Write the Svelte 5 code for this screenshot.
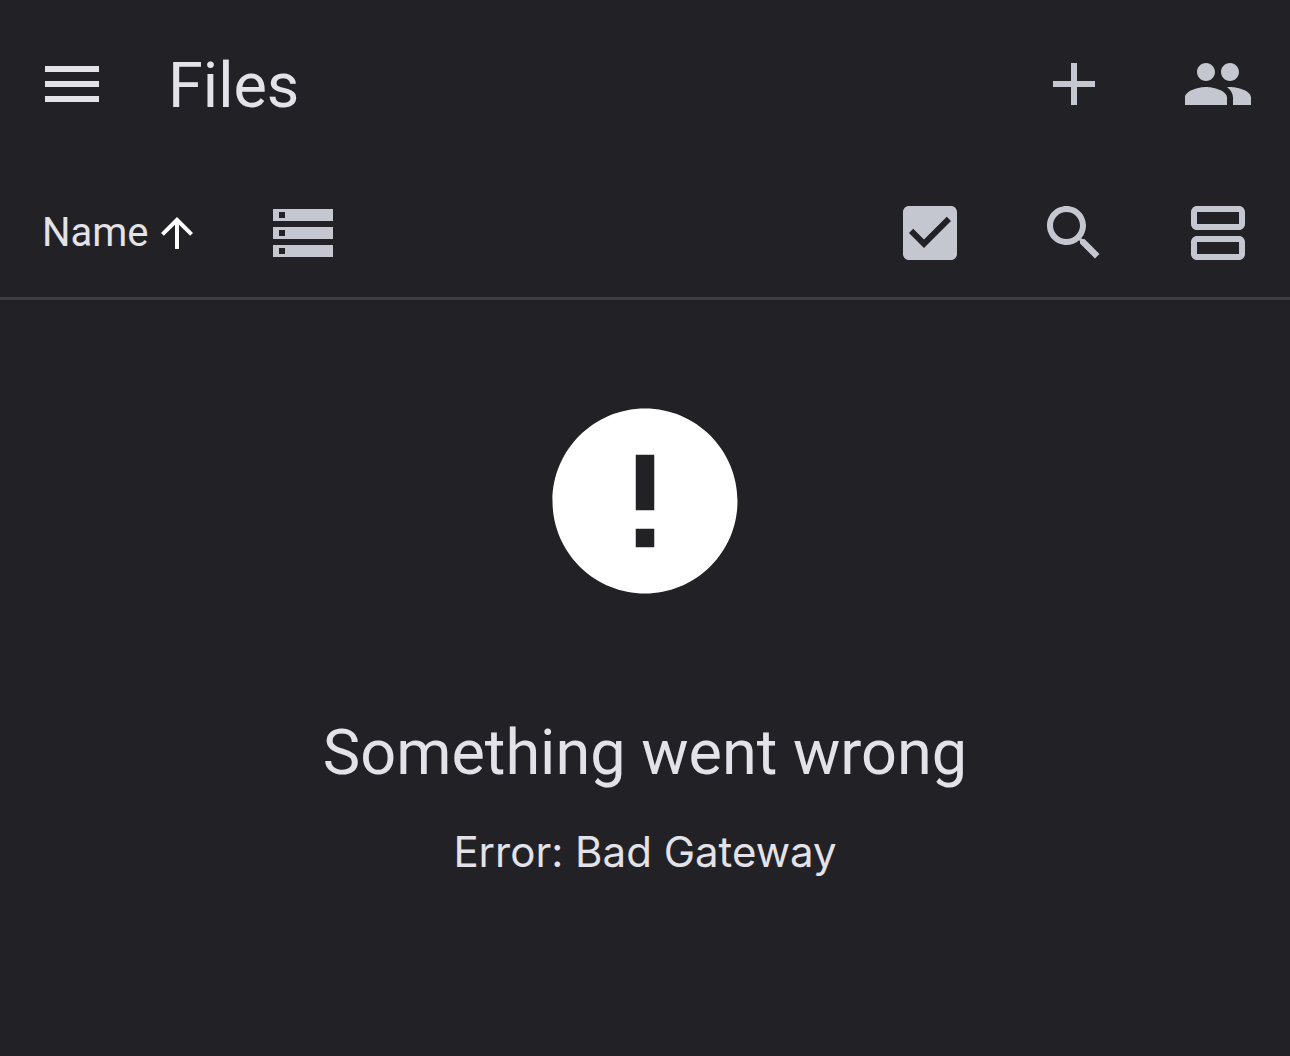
<script>
  let { title = 'Files', error = 'Bad Gateway' } = $props();

  const icons = {
    menu: 'M3 18h18v-2H3v2zm0-5h18v-2H3v2zm0-7v2h18V6H3z',
    add: 'M19 13h-6v6h-2v-6H5v-2h6V5h2v6h6v2z',
    group:
      'M16 11c1.66 0 2.99-1.34 2.99-3S17.66 5 16 5c-1.66 0-3 1.34-3 3s1.34 3 3 3zm-8 0c1.66 0 2.99-1.34 2.99-3S9.66 5 8 5C6.34 5 5 6.34 5 8s1.34 3 3 3zm0 2c-2.33 0-7 1.17-7 3.5V19h14v-2.5c0-2.33-4.67-3.5-7-3.5zm8 0c-.29 0-.62.02-.97.05 1.16.84 1.97 1.97 1.97 3.45V19h6v-2.5c0-2.33-4.67-3.5-7-3.5z',
    up: 'M4 12l1.41 1.41L11 7.83V20h2V7.83l5.58 5.59L20 12l-8-8-8 8z',
    storage:
      'M2 20h20v-4H2v4zm2-3h2v2H4v-2zM2 4v4h20V4H2zm4 3H4V5h2v2zm-4 7h20v-4H2v4zm2-3h2v2H4v-2z',
    checkbox:
      'M19 3H5c-1.11 0-2 .9-2 2v14c0 1.1.89 2 2 2h14c1.11 0 2-.9 2-2V5c0-1.1-.89-2-2-2zm-9 14l-5-5 1.41-1.41L10 14.17l7.59-7.59L19 8l-9 9z',
    search:
      'M15.5 14h-.79l-.28-.27C15.41 12.59 16 11.11 16 9.5 16 5.91 13.09 3 9.5 3S3 5.91 3 9.5 5.91 16 9.5 16c1.61 0 3.09-.59 4.23-1.57l.27.28v.79l5 4.99L20.49 19l-4.99-5zm-6 0C7.01 14 5 11.99 5 9.5S7.01 5 9.5 5 14 7.01 14 9.5 11.99 14 9.5 14z',
    agenda:
      'M19 13H5c-1.1 0-2 .9-2 2v4c0 1.1.9 2 2 2h14c1.1 0 2-.9 2-2v-4c0-1.1-.9-2-2-2zm0 6H5v-4h14v4zm0-16H5c-1.1 0-2 .9-2 2v4c0 1.1.9 2 2 2h14c1.1 0 2-.9 2-2V5c0-1.1-.9-2-2-2zm0 6H5V5h14v4z',
    error:
      'M12 2C6.48 2 2 6.48 2 12s4.48 10 10 10 10-4.48 10-10S17.52 2 12 2zm1 15h-2v-2h2v2zm0-4h-2V7h2v6z'
  };
</script>

{#snippet icon(name)}
  <svg class="icon" viewBox="0 0 24 24" aria-hidden="true">
    <path d={icons[name]} />
  </svg>
{/snippet}

<div class="page">
  <header class="appbar">
    <button class="icon-button menu" aria-label="Menu">{@render icon('menu')}</button>
    <h1>{title}</h1>
    <button class="icon-button" aria-label="Add">{@render icon('add')}</button>
    <button class="icon-button" aria-label="Shared">{@render icon('group')}</button>
  </header>

  <div class="toolbar">
    <button class="sort">Name {@render icon('up')}</button>
    <button class="icon-button" aria-label="Storage">{@render icon('storage')}</button>
    <span class="spacer"></span>
    <button class="icon-button" aria-label="Select">{@render icon('checkbox')}</button>
    <button class="icon-button" aria-label="Search">{@render icon('search')}</button>
    <button class="icon-button" aria-label="View">{@render icon('agenda')}</button>
  </div>

  <main>
    {@render icon('error')}
    <h2>Something went wrong</h2>
    <p>Error: {error}</p>
  </main>
</div>

<style>
  :global(body) {
    background: #222226;
  }

  .page {
    min-height: 100vh;
    background: #222226;
    color: #e3e2e8;
    font-family: Roboto, sans-serif;
  }

  button {
    border: 0;
    padding: 0;
    background: none;
    color: #c5c7d0;
    font: inherit;
    cursor: pointer;
  }

  .icon {
    display: block;
    width: 72px;
    height: 72px;
    fill: currentColor;
  }

  .icon-button {
    display: flex;
    align-items: center;
    justify-content: center;
    flex: none;
    width: 144px;
    height: 72px;
  }

  .menu {
    color: #e3e2e8;
  }

  .appbar {
    display: flex;
    align-items: center;
    height: 168px;
  }

  h1 {
    flex: 1;
    margin: 0;
    padding: 4px 0 0 24px;
    font-size: 63px;
    line-height: 84px;
    font-weight: 400;
  }

  .toolbar {
    display: flex;
    align-items: center;
    padding: 29px 0 28px;
    border-bottom: 3px solid #3d3d43;
  }

  .sort {
    display: flex;
    align-items: center;
    gap: 4px;
    padding-left: 42px;
    margin-right: 30px;
    color: #e3e2e8;
    font-size: 40px;
    line-height: 60px;
  }

  .sort .icon {
    width: 48px;
    height: 48px;
    color: #fff;
  }

  .spacer {
    flex: 1;
  }

  main {
    display: flex;
    flex-direction: column;
    align-items: center;
    padding: 90px 48px;
    text-align: center;
  }

  main .icon {
    width: 222px;
    height: 222px;
    color: #fff;
  }

  h2 {
    margin: 99px 0 0;
    font-size: 63px;
    line-height: 84px;
    font-weight: 400;
  }

  p {
    margin: 27px 0 0;
    font-family: Inter, Roboto, sans-serif;
    font-size: 42px;
    line-height: 60px;
  }
</style>
